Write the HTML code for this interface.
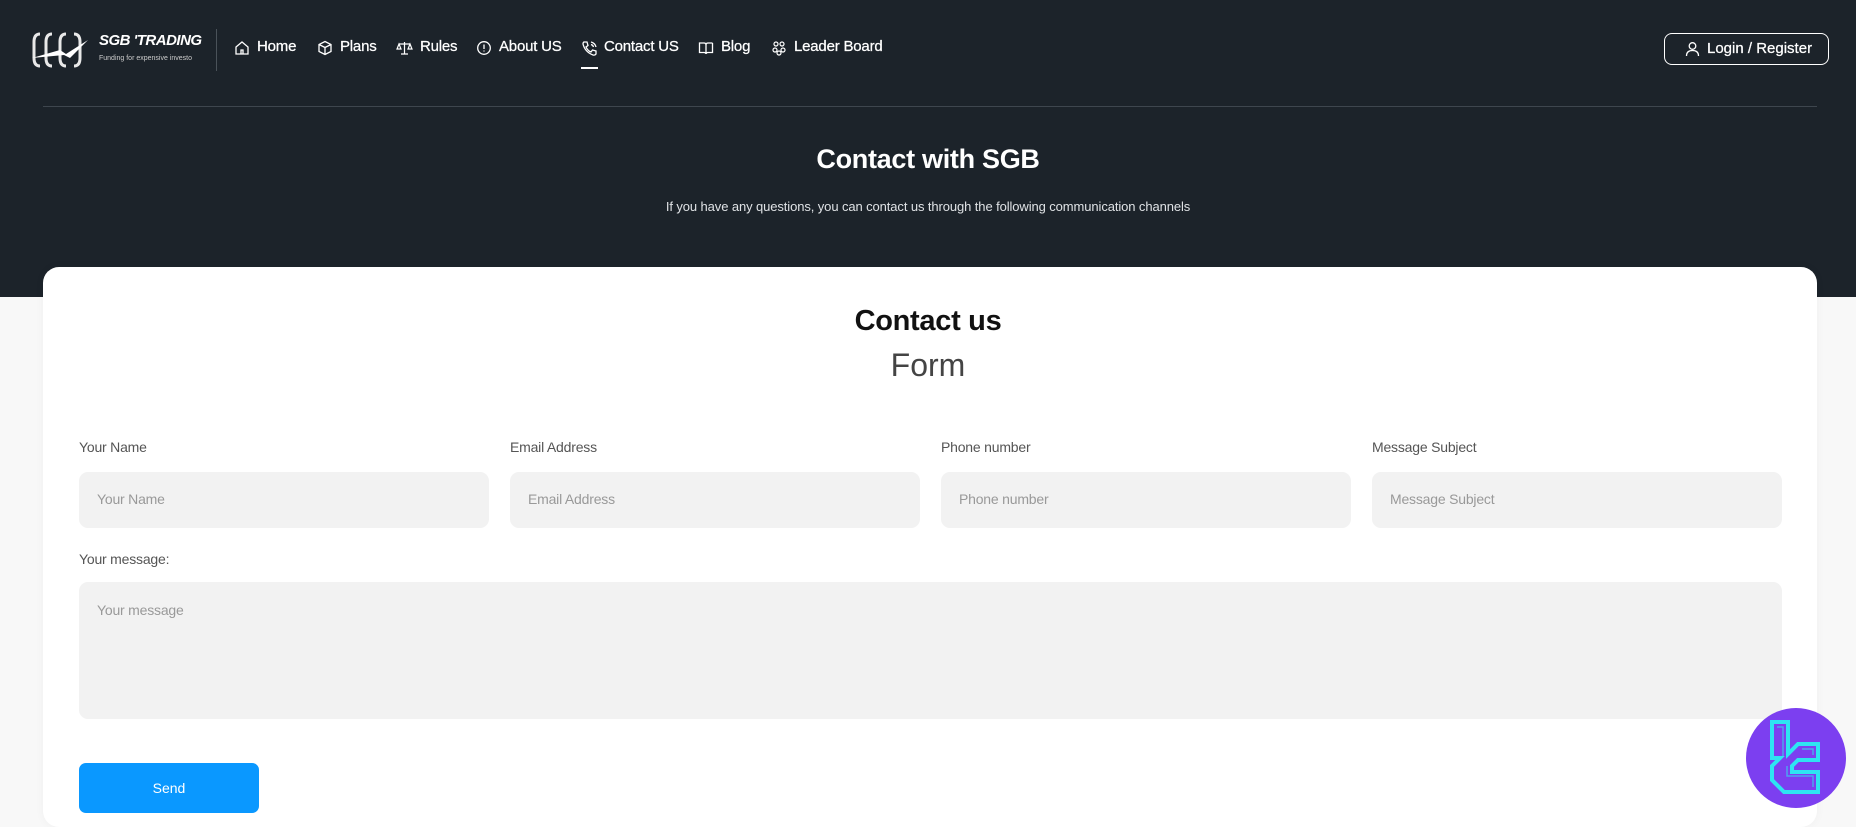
<!DOCTYPE html>
<html><head><meta charset="utf-8"><style>
*{margin:0;padding:0;box-sizing:border-box}
body{width:1856px;height:819px;overflow:hidden;background:#f8f8f8;font-family:"Liberation Sans",Arial,sans-serif;position:relative}
.hdr{position:absolute;left:0;top:0;width:1856px;height:297px;background:#1c232a}
.line{position:absolute;left:43px;top:106px;width:1774px;height:1px;background:#3e464e}
.nav{position:absolute;top:38px;color:#fff;font-size:15px;-webkit-text-stroke:.25px #fff;white-space:nowrap;letter-spacing:-.2px}
.ic{position:absolute;top:40px}
.login{position:absolute;left:1664px;top:33px;width:165px;height:32px;border:1.5px solid #fff;border-radius:8px;color:#fff;font-size:15px;-webkit-text-stroke:.25px #fff}
.card{position:absolute;left:43px;top:267px;width:1774px;height:560px;background:#fff;border-radius:16px;box-shadow:0 0 10px rgba(0,0,0,.04)}
.lbl{position:absolute;top:439px;font-size:14px;color:#555;letter-spacing:-.2px}
.inp{position:absolute;top:472px;width:410px;height:56px;background:#f2f2f2;border-radius:9px;font-size:14px;color:#999;padding:19px 18px;letter-spacing:-.2px}
</style></head><body>
<div class="hdr"></div>
<svg style="position:absolute;left:30px;top:28px" width="62" height="44" viewBox="0 0 62 44">
<g fill="none" stroke="#e8e8e8" stroke-width="3">
<path d="M10 6 q-6 0-6 8 v16 q0 8 6 8"/><path d="M22 6 q-6 0-6 8 v16 q0 8 6 8"/><path d="M36 6 q-6 0-6 8 v16 q0 8 6 8"/><path d="M44 6 q6 0 6 8 v16 q0 8-6 8"/>
</g><path d="M2 30 L30 22 L36 26 L58 12 L40 30 L34 27 Z" fill="#fff"/></svg>
<div style="position:absolute;left:99px;top:32px;color:#fff;font-size:15px;font-weight:bold;font-style:italic;letter-spacing:-.5px">SGB 'TRADING</div>
<div style="position:absolute;left:99px;top:55px;color:#ccc;font-size:7px">Funding for expensive investo</div>
<div style="position:absolute;left:216px;top:29px;width:1px;height:42px;background:#4a5259"></div>
<svg class="ic" style="left:234px" width="16" height="16" viewBox="0 0 16 16" fill="none" stroke="#fff" stroke-width="1.3"><path d="M2 7 L8 2 L14 7 V14 H2 Z M7 14 V10 H9 V14"/></svg>
<div class="nav" style="left:257px">Home</div>
<svg class="ic" style="left:317px" width="16" height="16" viewBox="0 0 16 16" fill="none" stroke="#fff" stroke-width="1.3"><path d="M8 1.5 L14 4.5 V11.5 L8 14.5 L2 11.5 V4.5 Z M2 4.5 L8 7.5 L14 4.5 M8 7.5 V14.5"/></svg>
<div class="nav" style="left:340px">Plans</div>
<svg class="ic" style="left:396px" width="17" height="16" viewBox="0 0 17 16" fill="none" stroke="#fff" stroke-width="1.2"><path d="M8.5 2 V14 M3 4 H14 M5 14 H12 M3 4 L1 9 H5 Z M14 4 L12 9 H16 Z"/></svg>
<div class="nav" style="left:420px">Rules</div>
<svg class="ic" style="left:476px" width="16" height="16" viewBox="0 0 16 16" fill="none" stroke="#fff" stroke-width="1.3"><circle cx="8" cy="8" r="6.3"/><path d="M8 4.5 V9 M8 10.5 V11.5"/></svg>
<div class="nav" style="left:499px">About US</div>
<svg class="ic" style="left:581px" width="17" height="17" viewBox="0 0 17 17" fill="none" stroke="#fff" stroke-width="1.3"><path d="M3 2 L6 2 L7 5.5 L5 7 Q7 11 10 12 L11.5 10 L15 11 V14 Q14 15.5 12 15 Q4 12 2 4 Q2 2.5 3 2 Z M10 2 Q14 3 15 7 M10 4.5 Q12 5 12.5 7"/></svg>
<div class="nav" style="left:604px">Contact US</div>
<div style="position:absolute;left:581px;top:67px;width:17px;height:2px;background:#fff"></div>
<svg class="ic" style="left:698px" width="16" height="16" viewBox="0 0 16 16" fill="none" stroke="#fff" stroke-width="1.3"><path d="M1.5 3 H6 Q8 3 8 5 V14 Q8 12.5 6 12.5 H1.5 Z M14.5 3 H10 Q8 3 8 5 M14.5 3 V12.5 H10 Q8 12.5 8 14"/></svg>
<div class="nav" style="left:721px">Blog</div>
<svg class="ic" style="left:771px" width="16" height="16" viewBox="0 0 16 16" fill="none" stroke="#fff" stroke-width="1.2"><circle cx="5" cy="4" r="2"/><circle cx="11" cy="4" r="2"/><circle cx="4" cy="10" r="2"/><circle cx="12" cy="10" r="2"/><circle cx="8" cy="13" r="2"/></svg>
<div class="nav" style="left:794px">Leader Board</div>
<div class="login"><svg style="position:absolute;left:20px;top:7px" width="15" height="16" viewBox="0 0 15 16" fill="none" stroke="#fff" stroke-width="1.3"><circle cx="7.5" cy="5" r="3.3"/><path d="M1.5 15 Q1.5 9.5 7.5 9.5 Q13.5 9.5 13.5 15"/></svg><span style="position:absolute;left:42px;top:6px">Login / Register</span></div>
<div class="line"></div>
<div style="position:absolute;left:0;width:1856px;top:144px;text-align:center;color:#fff;font-size:27px;font-weight:bold;letter-spacing:-.3px">Contact with SGB</div>
<div style="position:absolute;left:0;width:1856px;top:199px;text-align:center;color:#dfe2e5;font-size:13px;letter-spacing:-.1px">If you have any questions, you can contact us through the following communication channels</div>
<div class="card"></div>
<div style="position:absolute;left:0;width:1856px;top:305px;text-align:center;color:#111;font-size:29px;font-weight:bold;letter-spacing:-.3px">Contact us</div>
<div style="position:absolute;left:0;width:1856px;top:347px;text-align:center;color:#444;font-size:32px;font-weight:300">Form</div>
<div class="lbl" style="left:79px">Your Name</div>
<div class="lbl" style="left:510px">Email Address</div>
<div class="lbl" style="left:941px">Phone number</div>
<div class="lbl" style="left:1372px">Message Subject</div>
<div class="inp" style="left:79px">Your Name</div>
<div class="inp" style="left:510px">Email Address</div>
<div class="inp" style="left:941px">Phone number</div>
<div class="inp" style="left:1372px">Message Subject</div>
<div class="lbl" style="left:79px;top:551px">Your message:</div>
<div class="inp" style="left:79px;top:582px;width:1703px;height:137px;padding:20px 18px">Your message</div>
<div style="position:absolute;left:79px;top:763px;width:180px;height:50px;background:#0a98ff;border-radius:7px;color:#fff;font-size:14px;text-align:center;line-height:50px">Send</div>
<svg style="position:absolute;left:1746px;top:708px" width="100" height="100" viewBox="0 0 100 100">
<circle cx="50" cy="50" r="50" fill="#7c3ff0"/>
<path d="M26 14 H42 V46 L52 36 H72 V52 H52 L46 58 V64 H72 V84 H38 L26 72 V58 L34 50 H26 Z" fill="none" stroke="#2ee4f2" stroke-width="4" stroke-linejoin="miter"/>
<path d="M31 19 H37 V48 M56 41 H67 V47 M41 58 V68 H67 V79" fill="none" stroke="#2ee4f2" stroke-width="1.5" opacity=".6"/>
</svg>
</body></html>
